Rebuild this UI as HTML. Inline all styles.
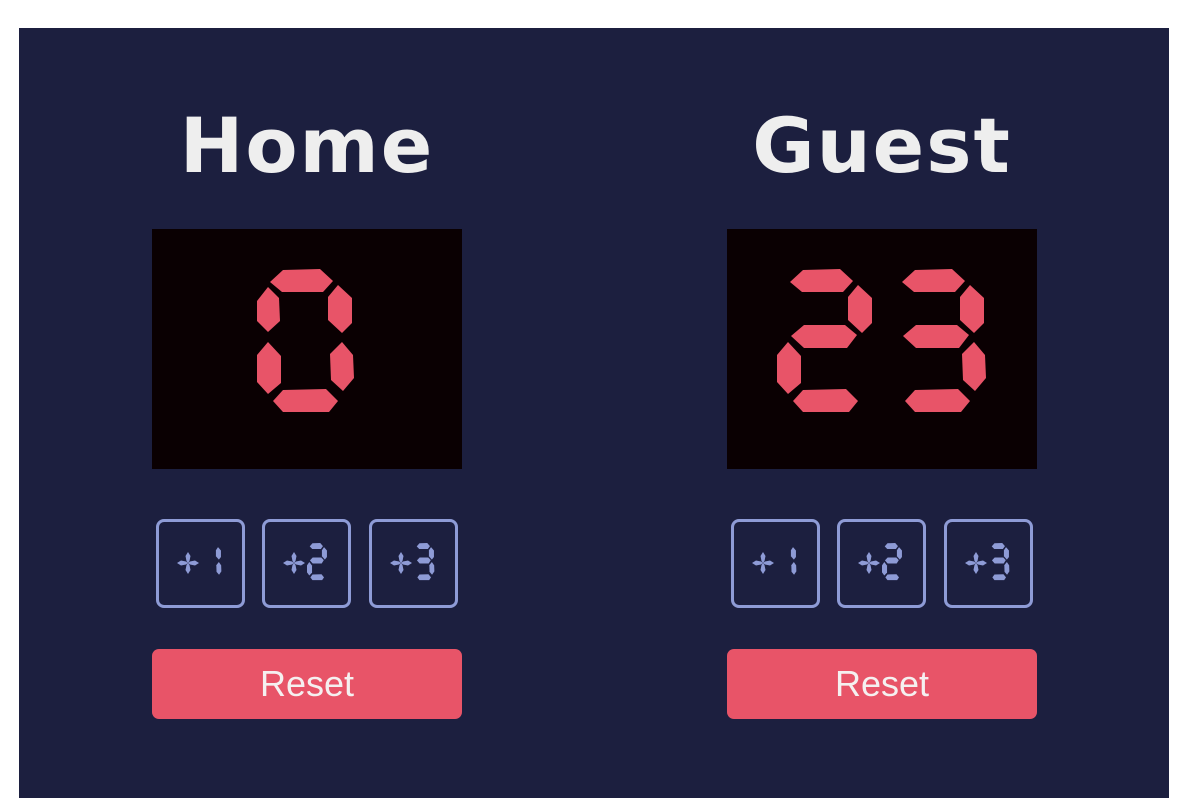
<!DOCTYPE html>
<html><head><meta charset="utf-8"><style>
html,body{margin:0;padding:0;background:#fff;width:1180px;height:808px;overflow:hidden}
#main{position:absolute;left:19px;top:28px;width:1150px;height:770px;background:#1c1f3f}
h1{position:absolute;margin:0;width:340px;text-align:center;font-family:"DejaVu Sans",Verdana,sans-serif;font-weight:bold;font-size:76px;color:#eeeeee;top:78px;line-height:80px;letter-spacing:2px}
.box{position:absolute;top:201px;width:310px;height:240px;background:#0a0002}
.btn{position:absolute;top:491px;width:83px;height:83px;border:3px solid #8e9bd6;border-radius:8px;box-sizing:content-box}
.reset{position:absolute;top:621px;width:310px;height:70px;background:#e85468;border-radius:7px;color:#f5f0f0;font-family:"Liberation Sans",Arial,sans-serif;font-size:36px;text-align:center;line-height:70px}
.hid{position:absolute;color:transparent;font-size:10px}
svg{position:absolute;left:0;top:0}
</style></head><body>
<div id="main">
<h1 style="left:118px">Home</h1>
<h1 style="left:693px">Guest</h1>
<div class="box" style="left:133px"><span class="hid">0</span></div>
<div class="box" style="left:708px"><span class="hid">23</span></div>
<div class="btn" style="left:137px"><span class="hid">+1</span></div>
<div class="btn" style="left:243px"><span class="hid">+2</span></div>
<div class="btn" style="left:350px"><span class="hid">+3</span></div>
<div class="btn" style="left:712px"><span class="hid">+1</span></div>
<div class="btn" style="left:818px"><span class="hid">+2</span></div>
<div class="btn" style="left:925px"><span class="hid">+3</span></div>
<div class="reset" style="left:133px">Reset</div>
<div class="reset" style="left:708px">Reset</div>
</div>
<svg width="1180" height="808" viewBox="0 0 1180 808">
<defs>
<polygon id="a" points="13,13 26,1 63,0 76,12 66,23 25,23"/>
<polygon id="b" points="81,16 95,29 95,54 85,64 71,51 71,28"/>
<polygon id="c" points="85,73 96,86 97,109 86,122 74,111 73,85"/>
<polygon id="d" points="16,132 26,121 69,120 81,132 72,143 26,143"/>
<polygon id="e" points="11,73 24,87 24,114 11,125 0,113 0,86"/>
<polygon id="f" points="11,18 22,29 23,52 11,63 0,52 0,32"/>
<polygon id="g" points="14,67 27,56 68,56 80,66 70,79 27,79"/>
<g id="plus">
<polygon points="-11,0 -7,-2.5 -2,-1.5 0,0 -2,1.5 -7,2.5"/>
<polygon points="11,0 7,-2.5 2,-1.5 0,0 2,1.5 7,2.5"/>
<polygon points="0,-11 -2.5,-7 -1.5,-2 0,0 1.5,-2 2.5,-7"/>
<polygon points="0,11 -2.5,7 -1.5,2 0,0 1.5,2 2.5,7"/>
</g>
</defs>
<g fill="#e85468">
<g transform="translate(257,269)"><use href="#a"/><use href="#b"/><use href="#c"/><use href="#d"/><use href="#e"/><use href="#f"/></g>
<g transform="translate(777,269)"><use href="#a"/><use href="#b"/><use href="#g"/><use href="#e"/><use href="#d"/></g>
<g transform="translate(889,269)"><use href="#a"/><use href="#b"/><use href="#g"/><use href="#c"/><use href="#d"/></g>
</g>
<g fill="#8e9bd6">
<g transform="translate(188,563)"><use href="#plus"/></g>
<g transform="translate(294,563)"><use href="#plus"/></g>
<g transform="translate(401,563)"><use href="#plus"/></g>
<g transform="translate(763,563)"><use href="#plus"/></g>
<g transform="translate(869,563)"><use href="#plus"/></g>
<g transform="translate(976,563)"><use href="#plus"/></g>
<g transform="translate(201,543) scale(0.21,0.26)"><use href="#b"/><use href="#c"/></g>
<g transform="translate(307,543) scale(0.21,0.26)"><use href="#a"/><use href="#b"/><use href="#g"/><use href="#e"/><use href="#d"/></g>
<g transform="translate(414,543) scale(0.21,0.26)"><use href="#a"/><use href="#b"/><use href="#g"/><use href="#c"/><use href="#d"/></g>
<g transform="translate(776,543) scale(0.21,0.26)"><use href="#b"/><use href="#c"/></g>
<g transform="translate(882,543) scale(0.21,0.26)"><use href="#a"/><use href="#b"/><use href="#g"/><use href="#e"/><use href="#d"/></g>
<g transform="translate(989,543) scale(0.21,0.26)"><use href="#a"/><use href="#b"/><use href="#g"/><use href="#c"/><use href="#d"/></g>
</g>
</svg>
</body></html>
